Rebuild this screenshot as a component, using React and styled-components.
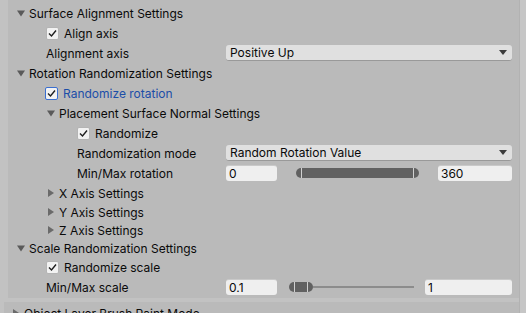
import React from "react";
import styled, { createGlobalStyle } from "styled-components";

const GlobalStyle = createGlobalStyle`
  html, body { margin: 0; padding: 0; background: #c2c2c2; }
  body { font-family: Inter, "Noto Sans", sans-serif; font-size: 12px; color: #0a0a0a; }
`;

const Window = styled.div`
  width: 526px;
  height: 313px;
  display: flex;
  overflow: hidden;
  background: #c2c2c2;
`;

const Content = styled.div`
  flex: 1;
  display: flex;
  flex-direction: column;
  gap: 4px;
`;

const Scrollbar = styled.div`
  width: 6px;
  border-left: 1px solid #b2b2b2;
  background: #c6c6c6;
`;

const Panel = styled.div`
  margin-left: ${(p) => p.$left}px;
  background: #bababa;
  padding: ${(p) => p.$pad};
  display: flex;
  flex-direction: column;
`;

const Row = styled.div`
  height: ${(p) => p.$h || 20}px;
  display: grid;
  grid-template-columns: 218px 1fr;
  align-items: center;
  padding-right: 7px;
`;

const HeaderRow = styled.div`
  height: ${(p) => p.$h || 20}px;
  display: flex;
  align-items: center;
  gap: ${(p) => p.$gap || 4}px;
  padding-left: ${(p) => p.$indent}px;
  color: ${(p) => p.$color || "#0a0a0a"};
  white-space: nowrap;
`;

const Label = styled.div`
  padding-left: ${(p) => p.$indent}px;
  display: flex;
  align-items: center;
  gap: 5px;
  color: ${(p) => p.$color || "#0a0a0a"};
  white-space: nowrap;
`;

const Box = styled.div`
  width: 11px;
  height: 11px;
  border-radius: 2px;
  background: #f2f2f2;
  border: 1px solid ${(p) => (p.$focus ? "#3a6fd0" : "#b4b4b4")};
  display: flex;
  align-items: center;
  justify-content: center;
`;

const Dropdown = styled.div`
  height: 16px;
  box-sizing: border-box;
  background: #e0e0e0;
  border-radius: 3px;
  border-bottom: 1px solid #999;
  display: flex;
  align-items: center;
  justify-content: space-between;
  padding: 0 5px 0 4px;
`;

const Field = styled.div`
  height: 16px;
  box-sizing: border-box;
  width: ${(p) => p.$w}px;
  flex: none;
  background: #efefef;
  border-radius: 3px;
  border-top: 1px solid #c9c9c9;
  display: flex;
  align-items: center;
  padding-left: 3px;
`;

const MinMaxWrap = styled.div`
  display: flex;
  align-items: center;
  justify-content: space-between;
`;

const SliderArea = styled.div`
  flex: none;
  width: ${(p) => p.$w}px;
  height: 10px;
  display: flex;
  align-items: center;
`;

const Thumb = styled.div`
  width: ${(p) => p.$w}px;
  flex: none;
  height: 10px;
  border-radius: 5px;
  background: #616161;
  display: flex;
  justify-content: space-between;
  padding: 0 5px;
  box-sizing: border-box;
`;

const Notch = styled.span`
  width: 1px;
  height: 10px;
  background: #d0d0d0;
`;

const Track = styled.div`
  flex: 1;
  height: 2px;
  background: #8c8c8c;
`;

const Tri = ({ open, color = "#5a5a5a" }) => (
  <svg width="8" height="8" viewBox="0 0 8 8" style={{ flex: "none" }}>
    {open ? (
      <polygon points="0,1.5 8,1.5 4,7.5" fill={color} />
    ) : (
      <polygon points="1,0 7,4 1,8" fill="#6a6a6a" />
    )}
  </svg>
);

const Check = ({ focus }) => (
  <Box $focus={focus}>
    <svg width="9" height="9" viewBox="0 0 9 9">
      <polyline points="1,4.5 3.5,7 8,1.5" fill="none" stroke="#1e1e1e" strokeWidth="1.4" />
    </svg>
  </Box>
);

const Arrow = () => (
  <svg width="8" height="5" viewBox="0 0 8 5">
    <polygon points="0,0 8,0 4,5" fill="#3c3c3c" />
  </svg>
);

const Header = ({ indent, h, open = true, children }) => (
  <HeaderRow $indent={indent} $h={h}>
    <Tri open={open} />
    <span>{children}</span>
  </HeaderRow>
);

const CheckRow = ({ indent, focus, children }) => (
  <HeaderRow $indent={indent} $gap={5} $color={focus ? "#1c4ea8" : undefined}>
    <Check focus={focus} />
    <span>{children}</span>
  </HeaderRow>
);

export default function App() {
  return (
    <Window>
      <GlobalStyle />
      <Content>
        <Panel $left={8} $pad="3px 0 1px">
          <Header indent={9}>Surface Alignment Settings</Header>
          <CheckRow indent={38}>Align axis</CheckRow>
          <Row>
            <Label $indent={38}>Alignment axis</Label>
            <Dropdown>
              <span>Positive Up</span>
              <Arrow />
            </Dropdown>
          </Row>
          <Header indent={9}>Rotation Randomization Settings</Header>
          <CheckRow indent={37} focus>Randomize rotation</CheckRow>
          <Header indent={39}>Placement Surface Normal Settings</Header>
          <CheckRow indent={69}>Randomize</CheckRow>
          <Row>
            <Label $indent={69}>Randomization mode</Label>
            <Dropdown>
              <span>Random Rotation Value</span>
              <Arrow />
            </Dropdown>
          </Row>
          <Row>
            <Label $indent={69}>Min/Max rotation</Label>
            <MinMaxWrap>
              <Field $w={51}>0</Field>
              <SliderArea $w={123}>
                <Thumb $w={123}>
                  <Notch />
                  <Notch />
                </Thumb>
              </SliderArea>
              <Field $w={74}>360</Field>
            </MinMaxWrap>
          </Row>
          <Header indent={39} open={false}>X Axis Settings</Header>
          <Header indent={39} h={18} open={false}>Y Axis Settings</Header>
          <Header indent={39} h={18} open={false}>Z Axis Settings</Header>
          <Header indent={9} h={18}>Scale Randomization Settings</Header>
          <CheckRow indent={38}>Randomize scale</CheckRow>
          <Row>
            <Label $indent={38}>Min/Max scale</Label>
            <MinMaxWrap>
              <Field $w={51}>0.1</Field>
              <SliderArea $w={125}>
                <Thumb $w={24}>
                  <Notch />
                  <Notch />
                </Thumb>
                <Track />
              </SliderArea>
              <Field $w={87}>1</Field>
            </MinMaxWrap>
          </Row>
        </Panel>
        <Panel $left={4} $pad="1px 0 0">
          <Header indent={8} open={false}>Object Layer Brush Paint Mode</Header>
        </Panel>
      </Content>
      <Scrollbar />
    </Window>
  );
}
